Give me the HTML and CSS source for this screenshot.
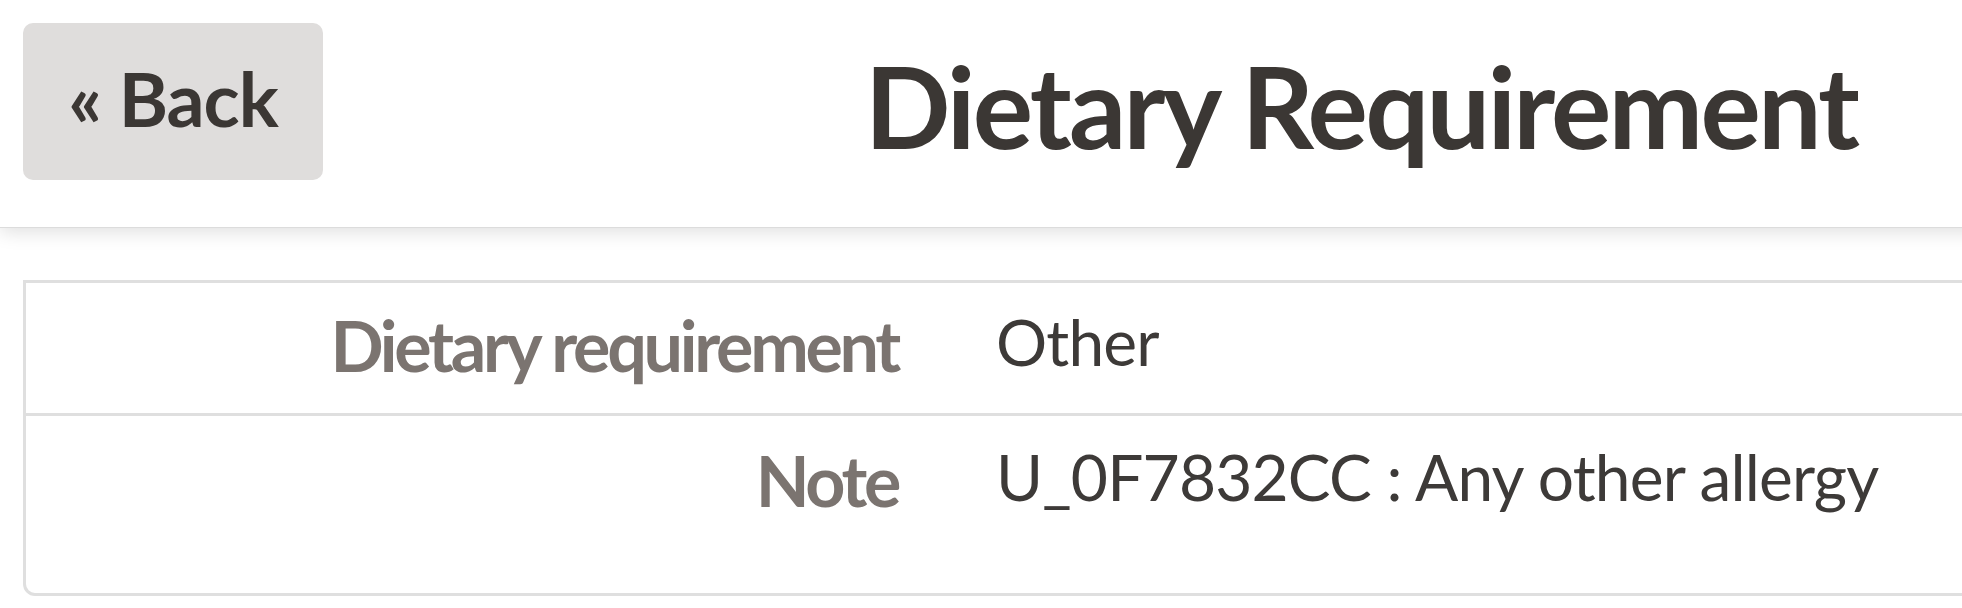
FILE: index.html
```html
<!DOCTYPE html>
<html lang="en">
<head>
<meta charset="utf-8">
<title>Dietary Requirement</title>
<link rel="stylesheet" href="styles.css">
</head>
<body>
<div class="page">
  <header class="topbar">
    <a class="back-btn" href="#">&laquo; Back</a>
    <h1 class="page-title">Dietary Requirement</h1>
    <span class="topbar-spacer"></span>
  </header>
  <main class="content">
    <div class="detail-table">
      <div class="detail-row">
        <div class="detail-label">Dietary requirement</div>
        <div class="detail-value">Other</div>
      </div>
      <div class="detail-row detail-row-last">
        <div class="detail-label">Note</div>
        <div class="detail-value">U_0F7832CC : Any other allergy</div>
      </div>
    </div>
  </main>
</div>
</body>
</html>
```

FILE: styles.css
```css
html, body {
  margin: 0;
  padding: 0;
  overflow: hidden;
  background: #ffffff;
}

.page {
  width: 2722px;
  font-family: "Lato", "Open Sans", sans-serif;
  color: #3b3734;
}

.topbar {
  display: grid;
  grid-template-columns: 1fr auto 1fr;
  align-items: start;
  height: 228px;
  padding: 23px 23px 0 23px;
  box-sizing: border-box;
  background: #ffffff;
  border-bottom: 1px solid #dcdcdc;
  box-shadow: 0 4px 18px rgba(0, 0, 0, 0.13);
  position: relative;
  z-index: 1;
}

.back-btn {
  justify-self: start;
  display: flex;
  align-items: flex-start;
  justify-content: center;
  width: 300px;
  height: 157px;
  box-sizing: border-box;
  padding-top: 38px;
  background: #dfdddc;
  border-radius: 10px;
  color: #3b3734;
  text-decoration: none;
  font-weight: 700;
  font-size: 75px;
  line-height: 1;
  letter-spacing: -1px;
}

.page-title {
  margin: 26px 0 0 0;
  font-size: 113px;
  line-height: 1;
  font-weight: 700;
  letter-spacing: -2.8px;
  color: #3b3734;
  white-space: nowrap;
}

.content {
  padding: 52px 23px 0 23px;
}

.detail-table {
  border: 3px solid #dfdfdf;
  border-radius: 0 0 10px 12px;
}

.detail-row {
  display: flex;
  align-items: flex-start;
  gap: 98px;
  padding: 27px 0 33px 0;
  border-bottom: 3px solid #dfdfdf;
}

.detail-row-last {
  border-bottom: none;
  padding-top: 29px;
  padding-bottom: 78px;
}

.detail-label {
  width: 872px;
  flex: none;
  text-align: right;
  font-weight: 700;
  font-size: 70px;
  line-height: 1;
  letter-spacing: -3.3px;
  color: #7b7470;
  white-space: nowrap;
}

.detail-value {
  font-size: 64px;
  line-height: 1;
  font-weight: 400;
  letter-spacing: -0.8px;
  color: #3d3a38;
  white-space: nowrap;
}
```
